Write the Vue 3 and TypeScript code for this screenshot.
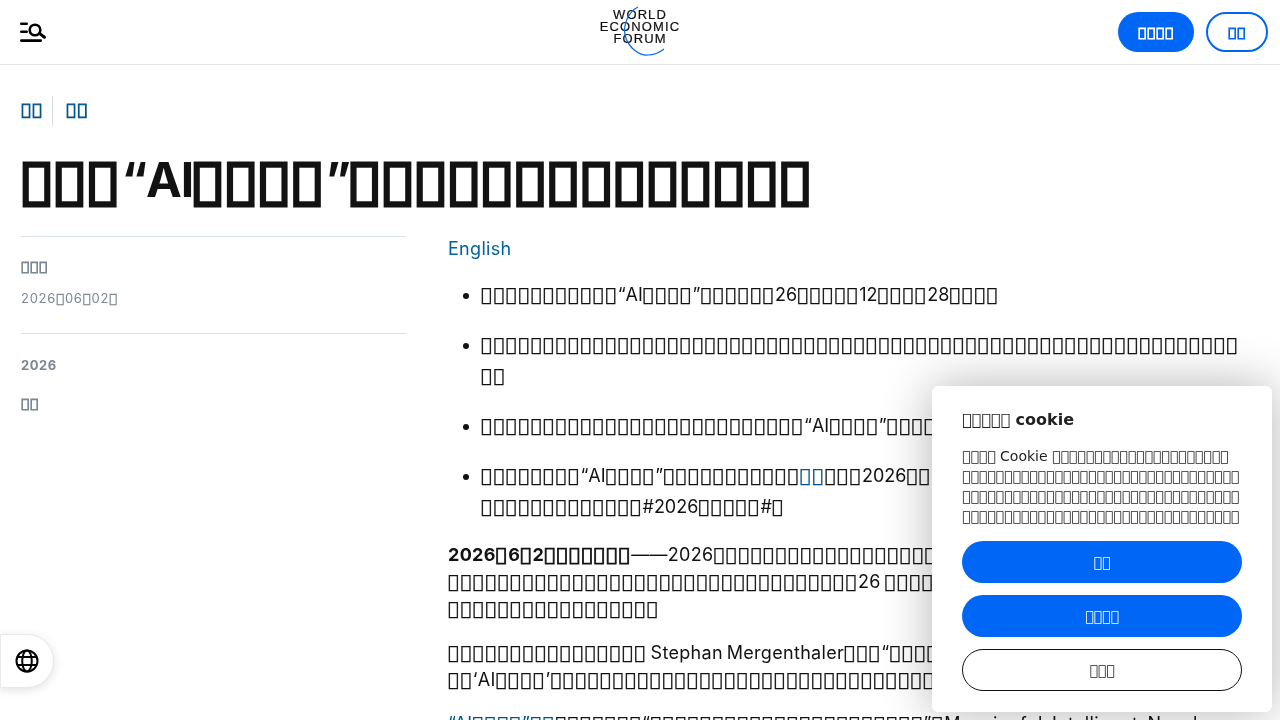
<script setup lang="ts">
import { h } from "vue";

// private-use char: draws the font's missing-glyph box, same as the reference
const TOFU = "\uE000";
const box = (n: number) => TOFU.repeat(n);

const Txt = (props: { s: string }) =>
  props.s
    .split(new RegExp(`(${TOFU}+)`))
    .filter(Boolean)
    .map((run) => h("span", { class: run[0] === TOFU ? "box" : "" }, run));
Txt.props = ["s"];

const bullets = [
  `${box(11)}“AI${box(4)}”${box(6)}26${box(5)}12${box(4)}28${box(4)}`,
  `${box(61)}\n${box(2)}`,
  `${box(26)}“AI${box(4)}”${box(26)}`,
];
</script>

<template>
  <div class="page">
    <header class="topbar">
      <button class="icon-btn" aria-label="menu">
        <svg width="26" height="22" viewBox="0 0 26 22" fill="none" stroke="#000" stroke-width="2.6" stroke-linecap="round">
          <path d="M1.3 2.7h5.4M1.3 10.7h5.4M1.3 19.6h19.4" />
          <circle cx="15" cy="9" r="5.3" />
          <path d="M19.6 12.4l4.8 3.8" stroke-width="3" />
        </svg>
      </button>
      <div class="logo">
        <svg class="logo-arc" width="80" height="64" viewBox="0 0 80 64" fill="none" stroke="#0066f5" stroke-width="1.2">
          <path d="M38 7C28 12 23 25 25 35C28 48 40 56 48 55C54 55 59 53 64 49" />
        </svg>
        <span>WORLD</span>
        <span>ECONOMIC</span>
        <span>FORUM</span>
      </div>
      <div class="actions">
        <a class="pill fill"><Txt :s="box(4)" /></a>
        <a class="pill line"><Txt :s="box(2)" /></a>
      </div>
    </header>

    <main class="article">
      <nav class="crumbs">
        <a><Txt :s="box(2)" /></a>
        <a><Txt :s="box(2)" /></a>
      </nav>
      <h1><Txt :s="`${box(3)}“AI${box(4)}”${box(14)}`" /></h1>

      <div class="cols">
        <aside class="meta">
          <div class="meta-block first">
            <strong><Txt :s="box(3)" /></strong>
            <span><Txt :s="`2026${box(1)}06${box(1)}02${box(1)}`" /></span>
          </div>
          <div class="meta-block">
            <strong>2026</strong>
            <strong><Txt :s="box(2)" /></strong>
          </div>
        </aside>

        <article class="body">
          <a class="lang">English</a>
          <ul>
            <li v-for="b in bullets" :key="b"><Txt :s="b" /></li>
            <li>
              <Txt :s="`${box(8)}“AI${box(4)}”${box(11)}`" /><a><Txt :s="box(2)" /></a><Txt :s="`${box(3)}2026${box(27)}\n${box(13)}#2026${box(5)}#${box(1)}`" />
            </li>
          </ul>
          <p>
            <b><Txt :s="`2026${box(1)}6${box(1)}2${box(7)}`" /></b><Txt :s="`——2026${box(40)}\n${box(33)}26 ${box(26)}\n${box(17)}`" />
          </p>
          <p>
            <Txt :s="`${box(16)} Stephan Mergenthaler${box(3)}“${box(25)}\n${box(2)}‘AI${box(4)}’${box(50)}`" />
          </p>
          <p>
            <a><Txt :s="`“AI${box(4)}”${box(2)}`" /></a><Txt :s="`${box(7)}“${box(22)}”${box(1)}Meaningful, Intelligent, Novel`" />
          </p>
        </article>
      </div>
    </main>

    <button class="lang-tab" aria-label="language">
      <svg width="24" height="24" viewBox="0 0 24 24" fill="none" stroke="#000" stroke-width="2">
        <circle cx="12" cy="12" r="10.5" />
        <ellipse cx="12" cy="12" rx="4.8" ry="10.5" />
        <path d="M2.6 8h18.8M2.6 16h18.8" />
      </svg>
    </button>

    <section class="cookie">
      <h2><Txt :s="`${box(5)} cookie`" /></h2>
      <p><Txt :s="`${box(4)} Cookie ${box(21)}\n${box(33)}\n${box(33)}\n${box(33)}`" /></p>
      <button class="ck fill"><Txt :s="box(2)" /></button>
      <button class="ck fill"><Txt :s="box(4)" /></button>
      <button class="ck line"><Txt :s="box(3)" /></button>
    </section>
  </div>
</template>

<style>
html, body {
  margin: 0;
  overflow: hidden;
}
.box {
  letter-spacing: 0.09em;
  font-family: "DejaVu Sans", sans-serif;
  -webkit-text-stroke: 0.3px currentColor;
}
b .box, strong .box, .crumbs .box, .pill .box {
  -webkit-text-stroke: 0.8px currentColor;
}
h1 .box {
  -webkit-text-stroke: 3.5px currentColor;
}
.cookie .box {
  letter-spacing: 0;
  font-weight: 400;
  -webkit-text-stroke: 0;
}
</style>

<style scoped>
.page {
  height: 720px;
  overflow: hidden;
  position: relative;
  background: #fff;
  color: #121212;
  font-family: Inter, "Liberation Sans", sans-serif;
}
.topbar {
  height: 64px;
  border-bottom: 1px solid #e3e6e8;
  display: flex;
  align-items: center;
  justify-content: space-between;
  padding: 0 12px 0 20px;
  position: relative;
}
.icon-btn {
  padding: 0;
  border: 0;
  background: none;
  height: 22px;
}
.logo {
  position: absolute;
  left: 600px;
  top: 9px;
  width: 80px;
  display: flex;
  flex-direction: column;
  align-items: center;
  font: 13px/12px "Liberation Sans", sans-serif;
  letter-spacing: 1.1px;
  color: #111;
  -webkit-text-stroke: 0.2px #111;
  will-change: transform;
}
.logo-arc {
  position: absolute;
  left: 0;
  top: -9px;
}
.actions {
  display: flex;
  gap: 12px;
  will-change: transform;
}
.pill {
  height: 40px;
  box-sizing: border-box;
  display: flex;
  align-items: center;
  justify-content: center;
  border-radius: 20px;
  font-size: 13px;
  font-weight: 700;
}
.pill.fill {
  width: 76px;
  background: #0066f5;
  color: #fff;
}
.pill.line {
  width: 62px;
  border: 2px solid #0066f5;
  color: #0066f5;
}
.article {
  padding: 0 21px;
  will-change: transform;
}
.crumbs {
  display: flex;
  margin-top: 31px;
  height: 30px;
  align-items: center;
  font-size: 16px;
  font-weight: 700;
  color: #00538f;
}
.crumbs a:first-child {
  padding-right: 9px;
  border-right: 1px solid #d6e0e8;
  line-height: 26px;
  height: 30px;
}
.crumbs a + a {
  padding-left: 13px;
  line-height: 26px;
  height: 30px;
}
h1 {
  margin: 24px 0 0;
  padding-left: 1px;
  font-size: 48px;
  line-height: 60px;
  font-weight: 700;
  letter-spacing: -1.2px;
  color: #121212;
}
.cols {
  display: flex;
  margin-top: 26px;
  gap: 42px;
}
.meta {
  width: 385px;
  flex: none;
}
.meta-block {
  border-top: 1px solid #d9e1e8;
  padding: 23px 0 26px;
  display: flex;
  flex-direction: column;
  gap: 22px;
  color: #7b8794;
  font-size: 13px;
}
.meta-block.first {
  padding: 21px 0 25px;
  gap: 14px;
}
.meta-block strong {
  line-height: 16px;
  letter-spacing: 0.5px;
}
.meta-block span {
  line-height: 18px;
  letter-spacing: 0.7px;
}
.body {
  flex: 1;
  font-size: 18px;
  line-height: 31px;
  letter-spacing: 0.3px;
  min-width: 0;
  white-space: pre-line;
}
.lang {
  display: block;
  line-height: 26px;
}
.body a {
  color: #00538f;
}
.body .lang {
  color: #00629f;
}
ul {
  margin: 17px 0 0;
  padding-left: 33px;
  letter-spacing: 0;
}
li {
  margin-bottom: 19px;
}
.body p {
  margin: 0 0 17px;
  line-height: 27px;
  word-spacing: -1.5px;
}
.lang-tab {
  position: absolute;
  left: 0;
  top: 634px;
  width: 54px;
  height: 54px;
  box-sizing: border-box;
  background: #fff;
  border: 1px solid #e8e8e8;
  border-radius: 0 27px 27px 0;
  box-shadow: 0 2px 10px rgba(0, 0, 0, 0.12);
  display: flex;
  align-items: center;
  justify-content: center;
  padding: 0;
}
.cookie {
  position: absolute;
  left: 932px;
  top: 386px;
  width: 340px;
  height: 326px;
  box-sizing: border-box;
  padding: 24px 30px;
  background: #fff;
  border-radius: 6px;
  box-shadow: 0 0 50px rgba(0, 0, 0, 0.3);
  font-family: "DejaVu Sans", sans-serif;
  color: #212121;
  will-change: transform;
}
.cookie h2 {
  margin: 0;
  font-size: 16px;
  line-height: 20px;
  font-weight: 700;
}
.cookie p {
  margin: 16px 0 0;
  font-size: 14px;
  line-height: 20px;
  white-space: pre-line;
}
.ck {
  display: block;
  width: 280px;
  height: 42px;
  box-sizing: border-box;
  border-radius: 21px;
  border: 0;
  margin-top: 12px;
  font: 14px "DejaVu Sans", sans-serif;
}
.cookie p + .ck {
  margin-top: 15px;
}
.ck.fill {
  background: #0066f5;
  color: #fff;
}
.ck.line {
  background: #fff;
  border: 1px solid #121212;
  color: #212121;
}
</style>
